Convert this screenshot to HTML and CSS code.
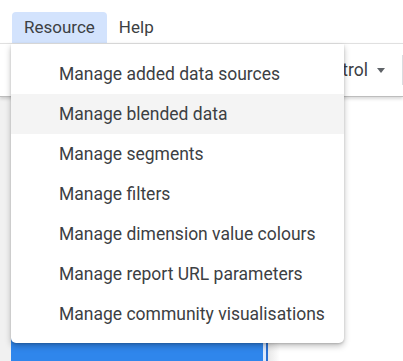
FILE: index.html
```html
<!DOCTYPE html>
<html lang="en">
<head>
    <meta charset="UTF-8">
    <title>Report editor</title>
    <link rel="stylesheet" href="styles.css">
</head>
<body>
    <div class="menubar">
        <span class="menu-btn active">Resource</span>
        <span class="menu-btn">Help</span>
    </div>

    <div class="toolbar">
        <span class="tool">Add a control <span class="caret"></span></span>
        <span class="sep"></span>
    </div>

    <div class="workspace">
        <div class="side"></div>
        <div class="canvas">
            <div class="canvas-head"></div>
            <div class="chart"></div>
        </div>
        <div class="panel"></div>
    </div>

    <!-- Resource menu -->
    <div class="dropdown">
        <div class="item">Manage added data sources</div>
        <div class="item hover">Manage blended data</div>
        <div class="item">Manage segments</div>
        <div class="item">Manage filters</div>
        <div class="item">Manage dimension value colours</div>
        <div class="item">Manage report URL parameters</div>
        <div class="item">Manage community visualisations</div>
    </div>
</body>
</html>
```

FILE: styles.css
```css
body {
    margin: 0;
    font-family: Roboto, "Noto Sans", sans-serif;
    color: #3c4043;
    background-color: #fff;
    overflow: hidden;
}

.menubar {
    height: 43px;
    display: flex;
    align-items: flex-end;
    padding-left: 12px;
}

.menu-btn {
    font-size: 17px;
    height: 31px;
    line-height: 31px;
    padding: 0 12px;
    border-radius: 4px 4px 0 0;
}

.menu-btn.active {
    background-color: #d3e3fd;
}

.toolbar {
    height: 52px;
    border-top: 1px solid #e0e0e0;
    border-bottom: 1px solid #bdbdbd;
    box-shadow: 0 2px 3px rgba(0,0,0,0.15);
    display: flex;
    align-items: center;
    justify-content: flex-end;
    font-size: 17.5px;
    position: relative;
    z-index: 1;
}

.tool {
    margin-right: 17px;
    display: flex;
    align-items: center;
}

.caret {
    display: inline-block;
    margin-left: 9px;
    border-left: 4.5px solid transparent;
    border-right: 4.5px solid transparent;
    border-top: 5px solid #5f6368;
}

.sep {
    width: 1px;
    height: 30px;
    background-color: #dadce0;
}

.workspace {
    display: flex;
    height: 265px;
}

.side {
    width: 11px;
    background-color: #f1f1f1;
}

.canvas {
    width: 255px;
    display: flex;
    flex-direction: column;
    background-color: #f5f5f5;
}

.canvas-head {
    height: 37px;
    border-top: 2px solid #2d7be0;
    margin-top: 14px;
    border-bottom: 17px solid #c8c8c8;
}

.chart {
    flex: 1;
    background-color: #2f86ec;
    border-right: 3px solid #dbe8fb;
}

.panel {
    flex: 1;
    border-left: 2px solid #2a6fd0;
    background: linear-gradient(to right, #e8e8e8, #fff 12px);
}

.dropdown {
    position: absolute;
    top: 44px;
    left: 11px;
    width: 333px;
    padding: 10px 0 9px;
    background-color: #fff;
    border-radius: 0 0 5px 5px;
    box-shadow: 0 3px 6px rgba(0,0,0,0.25), 0 1px 2px rgba(0,0,0,0.15);
    z-index: 2;
}

.item {
    height: 40px;
    line-height: 40px;
    padding-left: 48px;
    font-size: 17.5px;
    white-space: nowrap;
}

.item.hover {
    background-color: #f4f4f4;
}
```
